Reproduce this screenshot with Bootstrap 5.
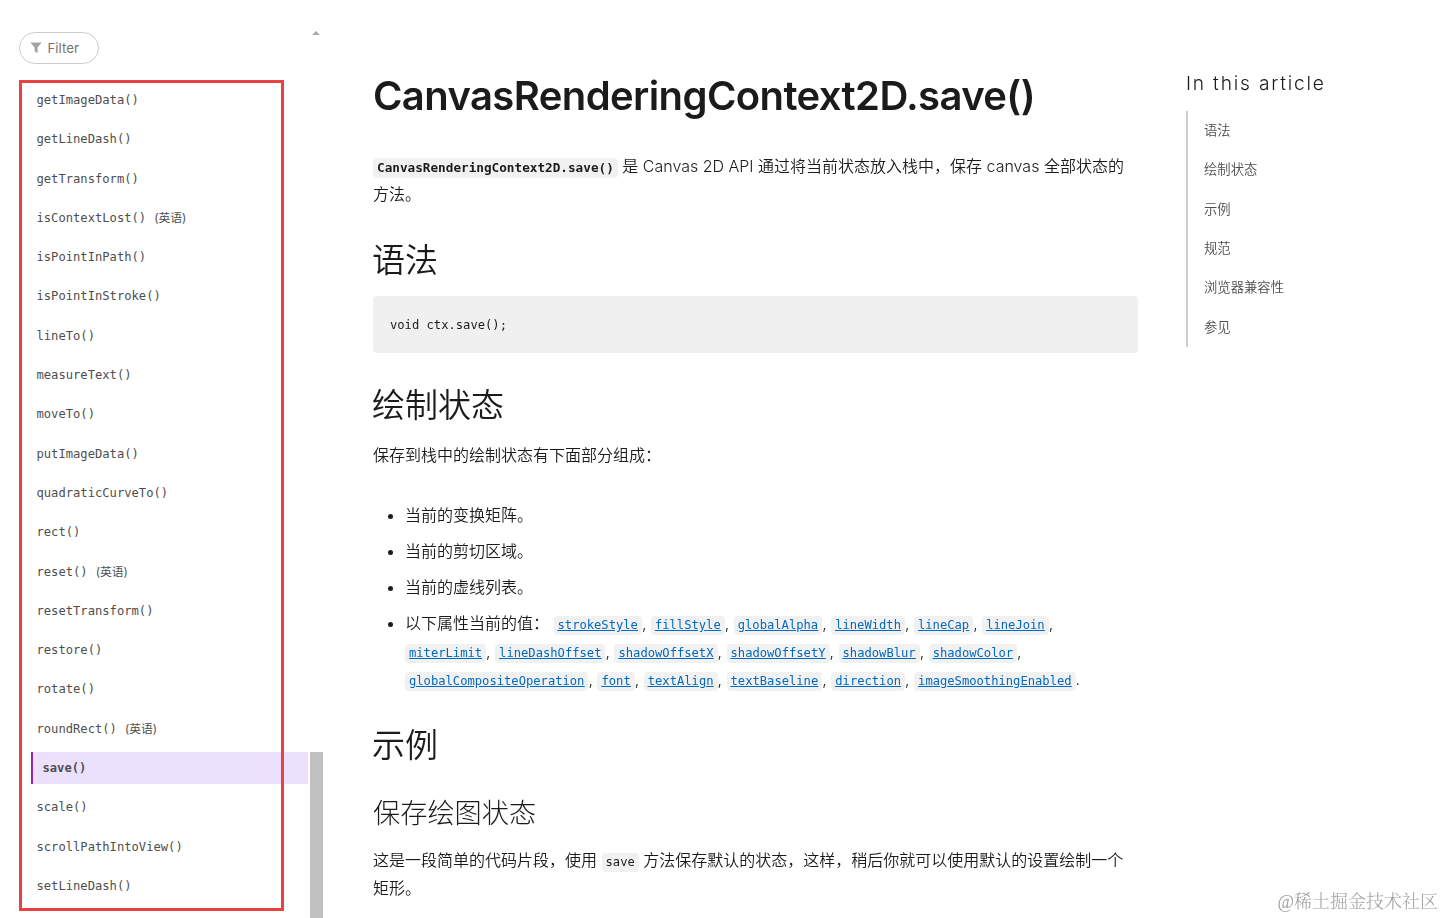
<!DOCTYPE html>
<html lang="zh-CN">
<head>
  <meta charset="UTF-8" />
  <meta name="viewport" content="width=device-width, initial-scale=1" />
  <title>CanvasRenderingContext2D.save()</title>
  <link href="https://cdn.jsdelivr.net/npm/bootstrap@5.3.0/dist/css/bootstrap.min.css" rel="stylesheet" />
  <style>
    body {
      font-family: Inter, "Noto Sans CJK SC", sans-serif;
      font-weight: 350;
      font-size: 16px;
      line-height: 28px;
      color: #1b1b1b;
      background: #fff;
    }
    .page { width: 1444px; height: 918px; }
    code, pre, .method-list a { font-family: "DejaVu Sans Mono", "Noto Sans CJK SC", monospace; }

    /* sidebar */
    .sidebar { width: 323px; padding: 32px 0 0 19px; }
    .filter-btn {
      width: 80px;
      height: 32px;
      border: 1px solid #cdcdcd;
      font-size: 13.3px;
      font-weight: 400;
      color: #757575;
      padding: 0 0 0 10px;
    }
    .filter-btn span { margin-left: 5.5px; padding-top: 1px; }
    .method-box { margin-top: 16px; width: 289px; padding: 4px 0 0 12px; }
    .frame {
      position: absolute;
      left: 0;
      top: 0;
      width: 265px;
      height: 831px;
      border: 3px solid #eb4141;
      pointer-events: none;
    }
    .method-list { gap: 7.3px; }
    .method-list a {
      display: block;
      height: 32px;
      line-height: 33px;
      padding-left: 5.5px;
      font-size: 12.15px;
      font-weight: 400;
      color: #4e4e4e;
      text-decoration: none;
      white-space: nowrap;
    }
    .method-list span { font-family: Inter, "Noto Sans CJK SC", sans-serif; font-size: 11.8px; margin-left: 8px; }
    .method-list a.current {
      padding-left: 9.5px;
      border-left: 2px solid #872bbf;
      background: #ebe1fd;
      font-weight: 700;
    }
    .scroll-up {
      position: absolute;
      left: 312px;
      top: 31px;
      border: 4px solid transparent;
      border-top: 0;
      border-bottom-color: #a9a9a9;
    }
    .scroll-thumb { position: absolute; left: 310px; top: 752px; width: 13px; height: 166px; background: #c0c0c0; }

    /* article */
    .article { width: 765px; margin-left: 50px; padding-top: 72px; }
    .article h1 { font-size: 40px; font-weight: 570; line-height: 48px; margin: 0 0 32px; letter-spacing: -0.6px; }
    .article p { margin: 0; }
    .article h2 { font-size: 33px; font-weight: 350; line-height: 40px; margin: 32px 0 16px -1px; }
    .article h3 { font-size: 27.2px; font-weight: 300; line-height: 34px; margin: 32px 0 15px; }
    .article code {
      font-size: 12.15px;
      font-weight: 400;
      line-height: 1;
      color: #1b1b1b;
      background: #f1f1f1;
      border-radius: 4px;
      padding: 2px 4px 3px;
    }
    .article strong { line-height: 1; }
    .article strong code { font-size: 12.7px; font-weight: 700; }
    .article a code { color: #0069c2; text-decoration: underline; }
    .article pre {
      height: 57px;
      margin: 0;
      padding: 0 17px;
      line-height: 59px;
      font-size: 12.15px;
      font-weight: 400;
      background: #f0f0f0;
      border-radius: 4px;
    }
    .article ul { margin: 32px 0 0; padding-left: 32px; }
    .article li + li { margin-top: 8px; }

    /* table of contents */
    .toc { margin-left: 48px; padding-top: 70px; }
    .toc-title { font-size: 19.2px; letter-spacing: 1.8px; line-height: 26px; margin-bottom: 15px; font-weight: 300; }
    .toc ul { border-left: 2px solid #cdcdcd; height: 236px; padding-left: 16px; }
    .toc li { height: 39.33px; line-height: 38px; font-size: 13.33px; }
    .toc a { color: #4e4e4e; text-decoration: none; }
    .watermark { position: absolute; right: 6px; bottom: 2px; font-family: "Liberation Serif", "Noto Serif CJK SC", "Noto Sans CJK SC", serif; font-size: 18px; font-weight: 300; color: #a0a0a0; }
  </style>
</head>
<body>
  <div class="page d-flex position-relative overflow-hidden">
    <aside class="sidebar flex-shrink-0">
      <button class="filter-btn btn rounded-pill d-flex align-items-center" type="button">
        <svg width="12" height="12" viewBox="0 0 12 12" fill="#a3a3a3"><path d="M.3.5h11.4L7.6 5.5V11L4.6 9.6V5.5z" /></svg>
        <span>Filter</span>
      </button>
      <nav class="method-box position-relative">
        <div class="method-list d-flex flex-column" id="methodList"></div>
        <div class="frame"></div>
      </nav>
      <div class="scroll-up"></div>
      <div class="scroll-thumb"></div>
    </aside>

    <main class="article flex-shrink-0">
      <h1>CanvasRenderingContext2D.save()</h1>
      <p><strong><code>CanvasRenderingContext2D.save()</code></strong> 是 Canvas 2D API 通过将当前状态放入栈中，保存 canvas 全部状态的方法。</p>
      <h2>语法</h2>
      <pre>void ctx.save();</pre>
      <h2>绘制状态</h2>
      <p>保存到栈中的绘制状态有下面部分组成：</p>
      <ul>
        <li>当前的变换矩阵。</li>
        <li>当前的剪切区域。</li>
        <li>当前的虚线列表。</li>
        <li>以下属性当前的值： <a href="#"><code>strokeStyle</code></a>, <a href="#"><code>fillStyle</code></a>, <a href="#"><code>globalAlpha</code></a>, <a href="#"><code>lineWidth</code></a>, <a href="#"><code>lineCap</code></a>, <a href="#"><code>lineJoin</code></a>,<br />
          <a href="#"><code>miterLimit</code></a>, <a href="#"><code>lineDashOffset</code></a>, <a href="#"><code>shadowOffsetX</code></a>, <a href="#"><code>shadowOffsetY</code></a>, <a href="#"><code>shadowBlur</code></a>, <a href="#"><code>shadowColor</code></a>,<br />
          <a href="#"><code>globalCompositeOperation</code></a>, <a href="#"><code>font</code></a>, <a href="#"><code>textAlign</code></a>, <a href="#"><code>textBaseline</code></a>, <a href="#"><code>direction</code></a>, <a href="#"><code>imageSmoothingEnabled</code></a>.</li>
      </ul>
      <h2>示例</h2>
      <h3>保存绘图状态</h3>
      <p>这是一段简单的代码片段，使用 <code>save</code> 方法保存默认的状态，这样，稍后你就可以使用默认的设置绘制一个矩形。</p>
    </main>

    <aside class="toc">
      <div class="toc-title">In this article</div>
      <ul class="list-unstyled mb-0">
        <li><a href="#">语法</a></li>
        <li><a href="#">绘制状态</a></li>
        <li><a href="#">示例</a></li>
        <li><a href="#">规范</a></li>
        <li><a href="#">浏览器兼容性</a></li>
        <li><a href="#">参见</a></li>
      </ul>
    </aside>
    <div class="watermark">@稀土掘金技术社区</div>
  </div>
  <script src="https://cdn.jsdelivr.net/npm/bootstrap@5.3.0/dist/js/bootstrap.bundle.min.js"></script>
  <script>
    const methods = [
      'getImageData', 'getLineDash', 'getTransform', 'isContextLost', 'isPointInPath', 'isPointInStroke',
      'lineTo', 'measureText', 'moveTo', 'putImageData', 'quadraticCurveTo', 'rect', 'reset', 'resetTransform',
      'restore', 'rotate', 'roundRect', 'save', 'scale', 'scrollPathIntoView', 'setLineDash'
    ];
    // pages that only exist in English
    const soloIngles = ['isContextLost', 'reset', 'roundRect'];
    document.getElementById('methodList').innerHTML = methods.map((m) => {
      const nota = soloIngles.includes(m) ? '<span>(英语)</span>' : '';
      return `<a href="#" class="${m === 'save' ? 'current' : ''}">${m}()${nota}</a>`;
    }).join('');
  </script>
</body>
</html>
